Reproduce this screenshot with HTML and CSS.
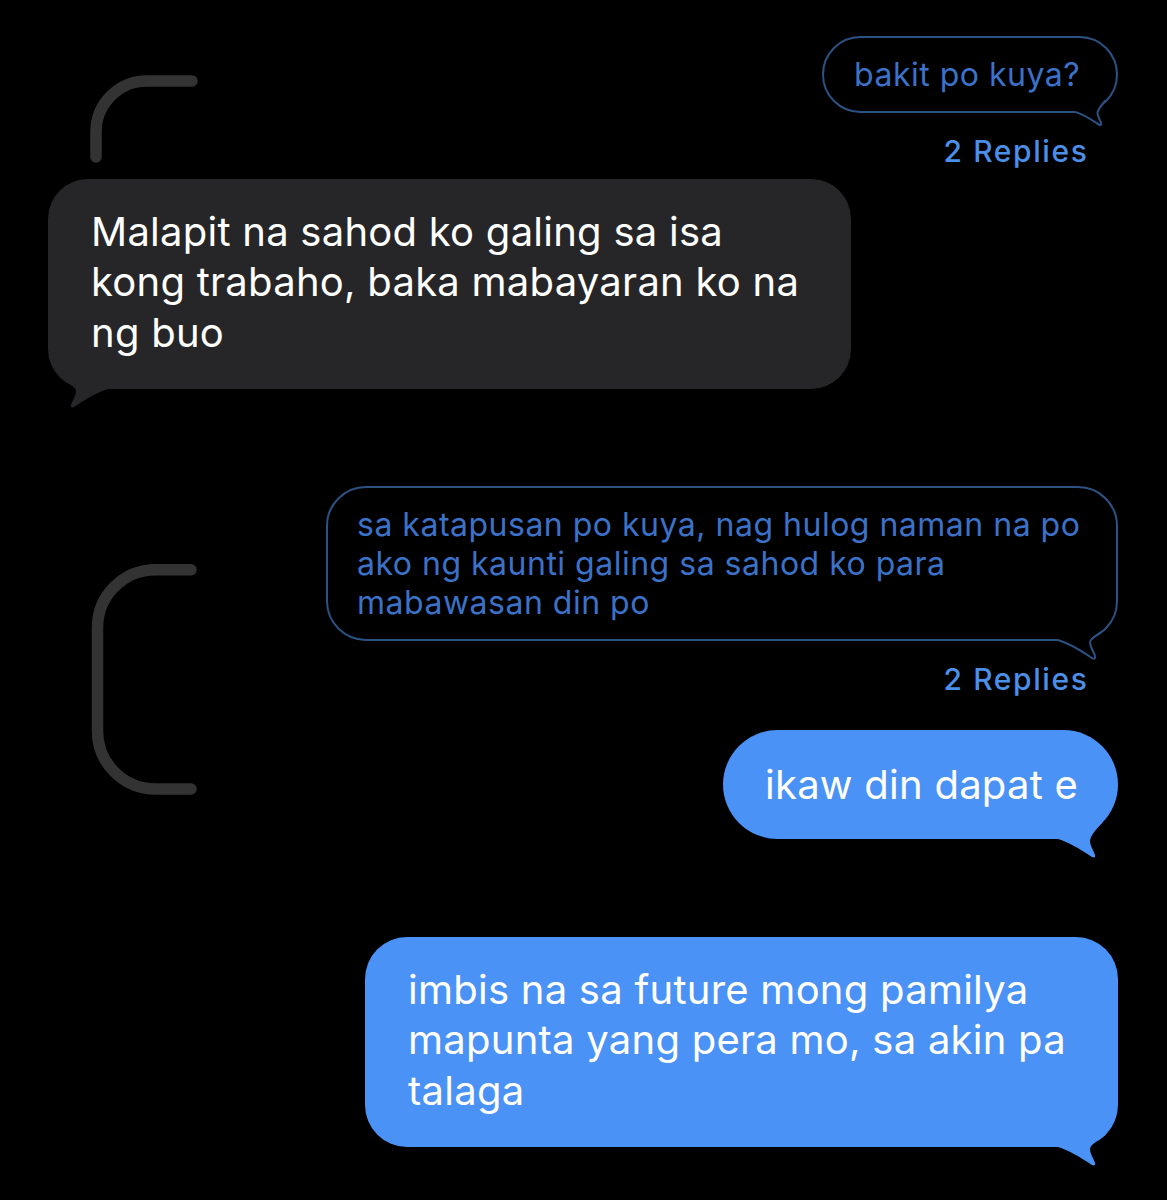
FILE: index.html
```html
<!DOCTYPE html>
<html lang="tl">
<head>
<meta charset="utf-8">
<title>Messages</title>
<link rel="stylesheet" href="styles.css">
</head>
<body>
<main class="chat">
  <section class="thread thread-1">
    <svg class="bracket bracket-short" viewBox="0 0 120 100" aria-hidden="true">
      <path d="M11 87 L11 62 A51 51 0 0 1 62 11 L107 11"/>
    </svg>
    <div class="stack">
      <div class="bubble outline b-question">bakit po kuya?<svg class="tail tail-small" viewBox="-62 -30 64 52" aria-hidden="true"><path class="mask" d="M-60 -1.4 C-50 1.6 -38 8.6 -29 14.6 C-26 17.1 -22 19.1 -23 14.6 C-24 10.6 -28 5.6 -28 0.6 C-28 -3.4 -20.9 -12.5 -16.7 -16.7 L-20 -20 L-30 -9 L-62 -6 Z"/><path class="edge" stroke-width="2.78" d="M-60 -1.4 C-50 1.6 -38 8.6 -29 14.6 C-26 17.1 -22 19.1 -23 14.6 C-24 10.6 -28 5.6 -28 0.6 C-28 -3.4 -20.9 -12.5 -16.7 -16.7"/></svg></div>
      <div class="replies">2 Replies</div>
    </div>
  </section>

  <div class="bubble gray big-text">Malapit na sahod ko galing sa isa kong trabaho, baka mabayaran ko na ng buo<svg class="tail tail-left" viewBox="-62 -30 64 52" aria-hidden="true"><path class="fill" d="M-62 -8 L-60 0 C-50 3 -38 10 -29 16 C-26 18.5 -22 20 -23 16 C-24 12 -28 7 -28 2 C-28 -3 -15.9 -7.5 -11.7 -11.7 L-16 -16 L-30 -10 Z"/></svg></div>

  <section class="thread thread-2">
    <svg class="bracket bracket-tall" viewBox="0 0 120 242" aria-hidden="true">
      <path d="M106 10.7 L70.5 10.7 A58 58 0 0 0 12.5 68.7 L12.5 172 A58 58 0 0 0 70.5 230 L106 230"/>
    </svg>
    <div class="stack">
      <div class="bubble outline b-answer">sa katapusan po kuya, nag hulog naman na po ako ng kaunti galing sa sahod ko para mabawasan din po<svg class="tail" viewBox="-62 -30 64 52" aria-hidden="true"><path class="mask" d="M-60 -1 C-50 2 -38 9 -29 15 C-26 17.5 -22 19.5 -23 15 C-24 11 -28 6 -28 1 C-28 -3 -16.6 -8.2 -12.4 -12.4 L-16 -16 L-30 -8 L-62 -6 Z"/><path class="edge" stroke-width="2" d="M-60 -1 C-50 2 -38 9 -29 15 C-26 17.5 -22 19.5 -23 15 C-24 11 -28 6 -28 1 C-28 -3 -16.6 -8.2 -12.4 -12.4"/></svg></div>
      <div class="replies">2 Replies</div>
      <div class="bubble blue big-text b-short">ikaw din dapat e<svg class="tail" viewBox="-62 -30 64 52" aria-hidden="true"><path class="fill" d="M-62 -8 L-60 0 C-50 3 -38 10 -29 16 C-26 18.5 -22 20 -23 16 C-24 12 -28 7 -28 2 C-28 -3 -20.2 -11.8 -16 -16 L-20 -20 L-30 -10 Z"/></svg></div>
    </div>
  </section>

  <div class="bubble blue big-text b-long">imbis na sa future mong pamilya mapunta yang pera mo, sa akin pa talaga<svg class="tail" viewBox="-62 -30 64 52" aria-hidden="true"><path class="fill" d="M-62 -8 L-60 0 C-50 3 -38 10 -29 16 C-26 18.5 -22 20 -23 16 C-24 12 -28 7 -28 2 C-28 -3 -16.5 -8.1 -12.3 -12.3 L-16 -16 L-30 -10 Z"/></svg></div>
</main>
</body>
</html>
```

FILE: styles.css
```css
html, body {
  margin: 0;
  padding: 0;
  background: #000;
}

.chat {
  width: 1167px;
  min-height: 1200px;
  box-sizing: border-box;
  padding: 36px 49px 0 48px;
  display: flex;
  flex-direction: column;
  font-family: Inter, "Noto Sans", "Liberation Sans", sans-serif;
  overflow: hidden;
}

.thread {
  display: flex;
  justify-content: space-between;
}

.thread-1 {
  align-items: flex-end;
}

.thread-2 {
  align-items: flex-start;
  margin-top: 97px;
}

.stack {
  display: flex;
  flex-direction: column;
  align-items: flex-end;
}

.bracket {
  flex: none;
  margin-left: 37px;
  fill: none;
  stroke: #333334;
  stroke-width: 11.5;
  stroke-linecap: round;
}

.bracket-short {
  width: 120px;
  height: 100px;
  margin-bottom: -2px;
}

.bracket-tall {
  width: 120px;
  height: 242px;
  margin-top: 73px;
}

.bubble {
  position: relative;
  box-sizing: border-box;
  flex: none;
}

.bubble.outline {
  border: 2px solid #2c5283;
  color: #3b72c8;
  font-size: 32px;
  line-height: 39px;
  letter-spacing: 0.5px;
}

.b-question {
  width: 296px;
  height: 77px;
  border-radius: 38.5px;
  padding: 17px 0 0 30px;
  white-space: nowrap;
}

.b-answer {
  width: 792px;
  border-radius: 40px;
  padding: 17px 20px 17px 29px;
}

.replies {
  margin-top: 21px;
  margin-right: 29.5px;
  color: #4a8fe8;
  font-size: 30px;
  line-height: 34px;
  font-weight: 500;
  letter-spacing: 1.6px;
}

.big-text {
  font-size: 40px;
  line-height: 50.5px;
  letter-spacing: 0.25px;
}

.bubble.gray {
  align-self: flex-start;
  margin-top: 10.5px;
  width: 803px;
  background: #262628;
  color: #fff;
  border-radius: 40px;
  padding: 28px 43px 31px 43px;
}

.bubble.blue {
  background: #4b92f6;
  color: #fff;
}

.b-short {
  margin-top: 33.5px;
  width: 395px;
  padding: 29px 0 29px 42px;
  line-height: 51px;
  border-radius: 54.5px;
  white-space: nowrap;
}

.b-long {
  align-self: flex-end;
  margin-top: 98px;
  width: 753px;
  padding: 28px 20px 31px 43px;
  border-radius: 42px;
}

.tail {
  position: absolute;
  right: -2px;
  bottom: -22px;
  width: 64px;
  height: 52px;
  overflow: visible;
}

.outline .tail {
  right: -4px;
  bottom: -24px;
}

.outline .tail-small {
  right: -3.44px;
  bottom: -17.84px;
  width: 46.08px;
  height: 37.44px;
}

.tail-left {
  right: auto;
  left: -2px;
  transform: scaleX(-1);
}

.gray .fill {
  fill: #262628;
}

.blue .fill {
  fill: #4b92f6;
}

.tail .mask {
  fill: #000;
}

.tail .edge {
  fill: none;
  stroke: #2c5283;
}
```
